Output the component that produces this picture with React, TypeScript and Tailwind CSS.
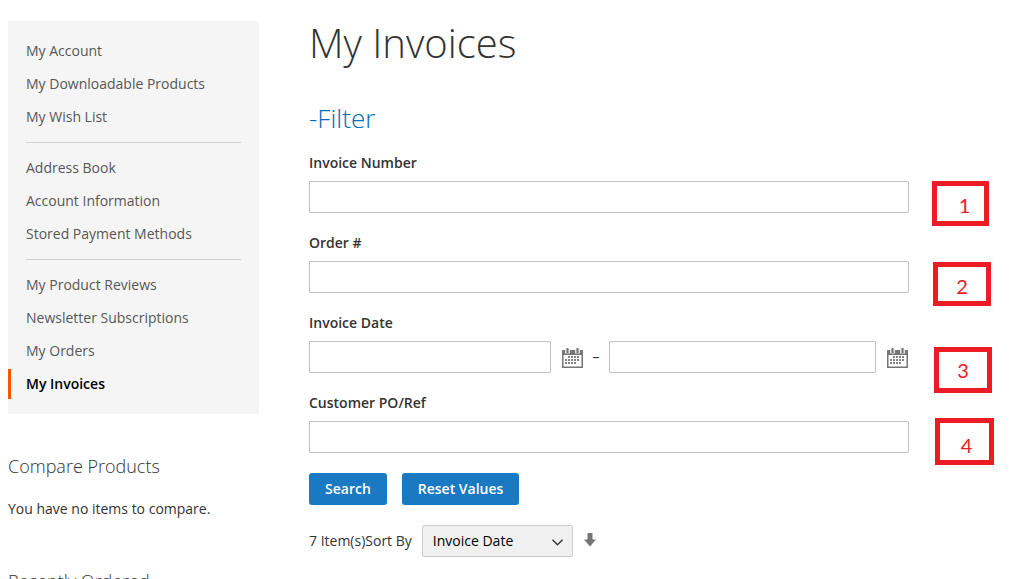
import type { ReactNode } from "react";

const menuGroups: string[][] = [
  ["My Account", "My Downloadable Products", "My Wish List"],
  ["Address Book", "Account Information", "Stored Payment Methods"],
  ["My Product Reviews", "Newsletter Subscriptions", "My Orders", "My Invoices"],
];

const inputClass =
  "h-8 w-full min-w-0 rounded-[1px] border border-[#c2c2c2] bg-white px-2 text-sm text-[#333] outline-none focus:border-[#1979c3]";

function CalendarIcon() {
  return (
    <svg width="21" height="20" viewBox="0 0 21 20" aria-hidden="true">
      <path d="M0 2h21v18H0z" fill="#757575" />
      <path d="M1.5 7h18v11.5h-18z" fill="#fff" />
      <path d="M3 1h5v4.5H3zM13 1h5v4.5h-5z" fill="#e4e4e4" />
      <path d="M4.5 0h2v5h-2zM14.5 0h2v5h-2z" fill="#757575" />
      <path
        d="M6 8h2v2H6zM9 8h2v2H9zM12 8h2v2h-2zM15 8h2v2h-2zM3 11h2v2H3zM6 11h2v2H6zM9 11h2v2H9zM12 11h2v2h-2zM15 11h2v2h-2zM3 14h2v2H3zM6 14h2v2H6zM9 14h2v2H9zM12 14h2v2h-2z"
        fill="#858585"
      />
    </svg>
  );
}

function Callout({ className, children }: { className: string; children: ReactNode }) {
  return (
    <span
      className={`absolute left-full flex items-center justify-center border-5 border-[#ed1c24] font-['Lato',sans-serif] text-xl leading-6 text-[#ed1c24] ${className}`}
    >
      {children}
    </span>
  );
}

function TextField({ id, label, callout }: { id: string; label: string; callout: ReactNode }) {
  return (
    <div className="relative flex flex-col gap-2">
      <label htmlFor={id} className="text-sm leading-5 font-semibold">
        {label}
      </label>
      <input id={id} type="text" className={inputClass} />
      {callout}
    </div>
  );
}

export default function App() {
  return (
    <div className="flex min-h-screen items-start gap-[50px] overflow-hidden bg-white pr-[105px] pl-2 font-['Open_Sans',sans-serif] text-sm text-[#333]">
      <aside className="-mb-10 w-[251px] shrink-0 pt-[21px]">
        <nav aria-label="Account" className="bg-[#f5f5f5] py-[15px]">
          {menuGroups.map((group, index) => (
            <div key={group[0]}>
              {index > 0 && <hr className="mx-[18px] my-2.5 border-[#d1d1d1]" />}
              <ul className="flex flex-col gap-[3px]">
                {group.map((item) => (
                  <li key={item}>
                    <a
                      href="#"
                      aria-current={item === "My Invoices" ? "page" : undefined}
                      className="block border-l-3 border-transparent pl-[15px] leading-[30px] text-[#575757] aria-[current=page]:border-[#ff5501] aria-[current=page]:font-semibold aria-[current=page]:text-black"
                    >
                      {item}
                    </a>
                  </li>
                ))}
              </ul>
            </div>
          ))}
        </nav>
        <section className="mt-10">
          <h2 className="text-lg leading-6 font-light">Compare Products</h2>
          <p className="mt-[21px] leading-5">You have no items to compare.</p>
        </section>
        <section className="mt-[50px]">
          <h2 className="text-lg leading-6 font-light">Recently Ordered</h2>
        </section>
      </aside>

      <main className="min-w-0 flex-1 pt-[21px]">
        <h1 className="text-[40px] leading-11 font-light">My Invoices</h1>
        <form onSubmit={(event) => event.preventDefault()}>
          <h2 className="mt-[35px] text-[26px] leading-9 font-light text-[#006bb4]">
            <a href="#">-Filter</a>
          </h2>
          <div className="mt-[17px] flex flex-col gap-5">
            <TextField
              id="invoice-number"
              label="Invoice Number"
              callout={<Callout className="top-7 ml-[23px] h-[45px] w-[57px] pt-0.5 pl-2">1</Callout>}
            />
            <TextField
              id="order-number"
              label="Order #"
              callout={<Callout className="top-[29px] ml-6 h-11 w-[58px] pt-1">2</Callout>}
            />
            <div className="relative">
              <fieldset className="min-w-0">
                <legend className="mb-2 text-sm leading-5 font-semibold">Invoice Date</legend>
                <div className="flex items-center">
                  <div className="flex min-w-0 flex-[242]">
                    <input type="text" aria-label="Invoice date from" className={inputClass} />
                  </div>
                  <button type="button" aria-label="Pick start date" className="ml-[11px] pt-0.5">
                    <CalendarIcon />
                  </button>
                  <span className="w-[26px] text-center leading-5">–</span>
                  <div className="flex min-w-0 flex-[267]">
                    <input type="text" aria-label="Invoice date to" className={inputClass} />
                  </div>
                  <button type="button" aria-label="Pick end date" className="mr-px ml-[11px] pt-0.5">
                    <CalendarIcon />
                  </button>
                </div>
              </fieldset>
              <Callout className="top-[34px] ml-[25px] h-[46px] w-[58px]">3</Callout>
            </div>
            <TextField
              id="customer-po"
              label="Customer PO/Ref"
              callout={<Callout className="top-[25px] ml-[26px] h-[47px] w-[59px] pt-1.5 pl-1">4</Callout>}
            />
          </div>
          <div className="mt-5 flex gap-[15px]">
            <button type="submit" className="h-8 rounded-[3px] bg-[#1979c3] px-4 font-semibold text-white">
              Search
            </button>
            <button type="reset" className="h-8 rounded-[3px] bg-[#1979c3] px-4 font-semibold text-white">
              Reset Values
            </button>
          </div>
        </form>
        <div className="mt-5 flex items-center">
          <span>7 Item(s)</span>
          <label htmlFor="sort-by">Sort By</label>
          <div className="relative ml-2.5">
            <select
              id="sort-by"
              defaultValue="Invoice Date"
              className="h-8 w-[151px] appearance-none rounded-[2px] border border-[#ccc] bg-[#f0f0f0] pr-7 pl-2.5 text-sm text-black"
            >
              <option>Invoice Date</option>
              <option>Invoice Number</option>
              <option>Order #</option>
            </select>
            <svg
              className="pointer-events-none absolute top-3.5 right-2.5"
              width="11"
              height="7"
              viewBox="0 0 11 7"
              fill="none"
              stroke="#333"
              strokeWidth="1.4"
              aria-hidden="true"
            >
              <path d="M.5 .8 5.5 5.8 10.5 .8" />
            </svg>
          </div>
          <button type="button" aria-label="Set descending direction" className="ml-[11px] pb-0.5">
            <svg width="12" height="14" viewBox="0 0 12 14" fill="#757575" aria-hidden="true">
              <path d="M3.5 0h5v6.5H12L6 13.5 0 6.5h3.5z" />
            </svg>
          </button>
        </div>
      </main>
    </div>
  );
}
